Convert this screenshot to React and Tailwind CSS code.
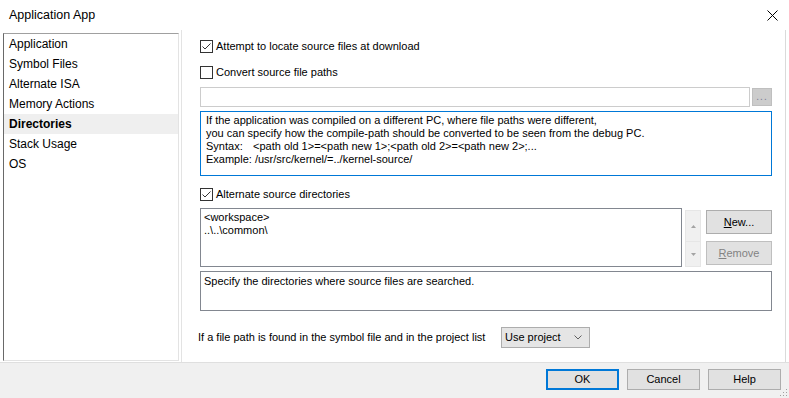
import { useState } from "react";

const pages = [
  "Application",
  "Symbol Files",
  "Alternate ISA",
  "Memory Actions",
  "Directories",
  "Stack Usage",
  "OS",
];

function CheckBox({ checked, label }) {
  return (
    <div className="flex items-center h-[13px]">
      <div className="w-[13px] h-[13px] border border-[#333333] bg-white flex items-center justify-center shrink-0">
        {checked && (
          <svg width="11" height="11" viewBox="0 0 11 11">
            <path d="M1.5 5.5 L4 8 L9.5 2.5" fill="none" stroke="#333333" strokeWidth="1" />
          </svg>
        )}
      </div>
      <span className="ml-[3px] text-[11px] leading-[13px]">{label}</span>
    </div>
  );
}

function PageList() {
  const [active, setActive] = useState("Directories");
  return (
    <div className="w-[176px] h-[328px] mt-[3px] ml-[3px] border-t border-l border-t-[#a0a0a0] border-l-[#696969] border-r border-b border-r-[#e3e3e3] border-b-[#e3e3e3] bg-white">
      {pages.map((p) => (
        <div
          key={p}
          onClick={() => setActive(p)}
          className={`h-[20px] flex items-center pl-[5px] text-[12px] ${
            active === p ? "bg-[#efefef] font-bold" : ""
          }`}
        >
          {p}
        </div>
      ))}
    </div>
  );
}

function Button({ children, primary, disabled, className = "" }) {
  return (
    <div
      className={`flex items-center justify-center text-[11px] bg-[#e1e1e1] ${
        primary ? "border-2 border-[#0078d7]" : "border border-[#adadad]"
      } ${disabled ? "bg-[#cccccc] border-[#bfbfbf] text-[#838383]" : ""} ${className}`}
    >
      {children}
    </div>
  );
}

function DirectoriesPage() {
  return (
    <div className="flex-1 h-[332px] border-l border-[#e3e3e3] border-r border-r-[#dadada] bg-white pl-[18px] pr-[12px] flex flex-col text-[11px]">
      <div className="mt-[10px]">
        <CheckBox checked label="Attempt to locate source files at download" />
      </div>
      <div className="mt-[13px]">
        <CheckBox label="Convert source file paths" />
      </div>

      <div className="mt-[8px] flex items-center gap-[2px] h-[20px]">
        <div className="w-[550px] h-[20px] border border-[#cccccc] bg-white" />
        <div className="w-[20px] h-[18px] bg-[#cccccc] border border-[#bfbfbf] flex items-center justify-center text-[10px] text-[#7d7d95] tracking-[1px] leading-none">
          ...
        </div>
      </div>

      <div className="mt-[4px] w-[572px] h-[65px] border border-[#0078d7] pl-[5px] pt-[2px] leading-[13px]">
        <div>If the application was compiled on a different PC, where file paths were different,</div>
        <div>you can specify how the compile-path should be converted to be seen from the debug PC.</div>
        <div>
          <span className="inline-block w-[47px]">Syntax:</span>
          {"<path old 1>=<path new 1>;<path old 2>=<path new 2>;..."}
        </div>
        <div>Example: /usr/src/kernel/=../kernel-source/</div>
      </div>

      <div className="mt-[12px]">
        <CheckBox checked label="Alternate source directories" />
      </div>

      <div className="mt-[7px] flex h-[59px]">
        <div className="w-[482px] h-[59px] border border-[#828790] pl-[3px] pt-[2px] leading-[13px]">
          <div>{"<workspace>"}</div>
          <div>{"..\\..\\common\\"}</div>
        </div>
        <div className="ml-[3px] w-[16px] h-[57px] mt-[2px] flex flex-col">
          <div className="h-[32px] bg-[#f0f0f0] border border-[#e6e6e6] flex items-center justify-center">
            <svg width="5" height="3" viewBox="0 0 5 3">
              <path d="M0 3 L2.5 0 L5 3 Z" fill="#a3a3a3" />
            </svg>
          </div>
          <div className="h-[25px] bg-[#f0f0f0] border border-[#e6e6e6] border-t-0 flex items-center justify-center">
            <svg width="5" height="3" viewBox="0 0 5 3">
              <path d="M0 0 L2.5 3 L5 0 Z" fill="#a3a3a3" />
            </svg>
          </div>
        </div>
        <div className="ml-[5px] w-[66px] flex flex-col pt-[2px]">
          <Button className="h-[24px]">
            <span>
              <span className="underline">N</span>ew...
            </span>
          </Button>
          <Button disabled className="h-[24px] mt-[7px]">
            <span>
              <span className="underline">R</span>emove
            </span>
          </Button>
        </div>
      </div>

      <div className="mt-[4px] w-[572px] h-[40px] border border-[#828790] pl-[3px] pt-[3px] leading-[13px]">
        Specify the directories where source files are searched.
      </div>

      <div className="mt-[16px] flex items-center h-[21px] -ml-[2px]">
        <span className="w-[303px]">If a file path is found in the symbol file and in the project list</span>
        <div className="w-[89px] h-[21px] bg-[#e5e5e5] border border-[#adadad] flex items-center justify-between pl-[3px] pr-[7px]">
          <span>Use project</span>
          <svg width="8" height="5" viewBox="0 0 8 5">
            <path d="M0.5 0.5 L4 4 L7.5 0.5" fill="none" stroke="#606060" strokeWidth="1" />
          </svg>
        </div>
      </div>
    </div>
  );
}

export default function App() {
  return (
    <div className="w-[789px] h-[398px] bg-white flex flex-col font-['Liberation_Sans',Arial,sans-serif] text-black overflow-hidden">
      {/* title bar */}
      <div className="h-[30px] flex items-center justify-between pl-[9px] pr-[11px] shrink-0">
        <span className="text-[12.5px]">Application App</span>
        <svg width="11" height="11" viewBox="0 0 11 11">
          <path d="M0.5 0.5 L10.5 10.5 M10.5 0.5 L0.5 10.5" stroke="#000" strokeWidth="1" />
        </svg>
      </div>

      <div className="flex h-[332px] shrink-0">
        <div className="w-[181px] shrink-0">
          <PageList />
        </div>
        <DirectoriesPage />
        <div className="w-[3px] shrink-0" />
      </div>

      {/* footer */}
      <div className="flex-1 bg-[#f0f0f0] border-t border-[#dfdfdf] flex justify-end items-start pt-[6px] pr-[8px] gap-[8px] relative">
        <Button primary className="w-[73px] h-[21px]">OK</Button>
        <Button className="w-[73px] h-[21px]">Cancel</Button>
        <Button className="w-[73px] h-[21px]">Help</Button>
        <svg className="absolute right-[1px] bottom-[1px]" width="8" height="8" viewBox="0 0 8 8">
          <rect x="6" y="6" width="1" height="1" fill="#a0a0a0" />
          <rect x="3" y="6" width="1" height="1" fill="#a0a0a0" />
          <rect x="6" y="3" width="1" height="1" fill="#a0a0a0" />
          <rect x="0" y="6" width="1" height="1" fill="#a0a0a0" />
          <rect x="3" y="3" width="1" height="1" fill="#a0a0a0" />
          <rect x="6" y="0" width="1" height="1" fill="#a0a0a0" />
        </svg>
      </div>
    </div>
  );
}
